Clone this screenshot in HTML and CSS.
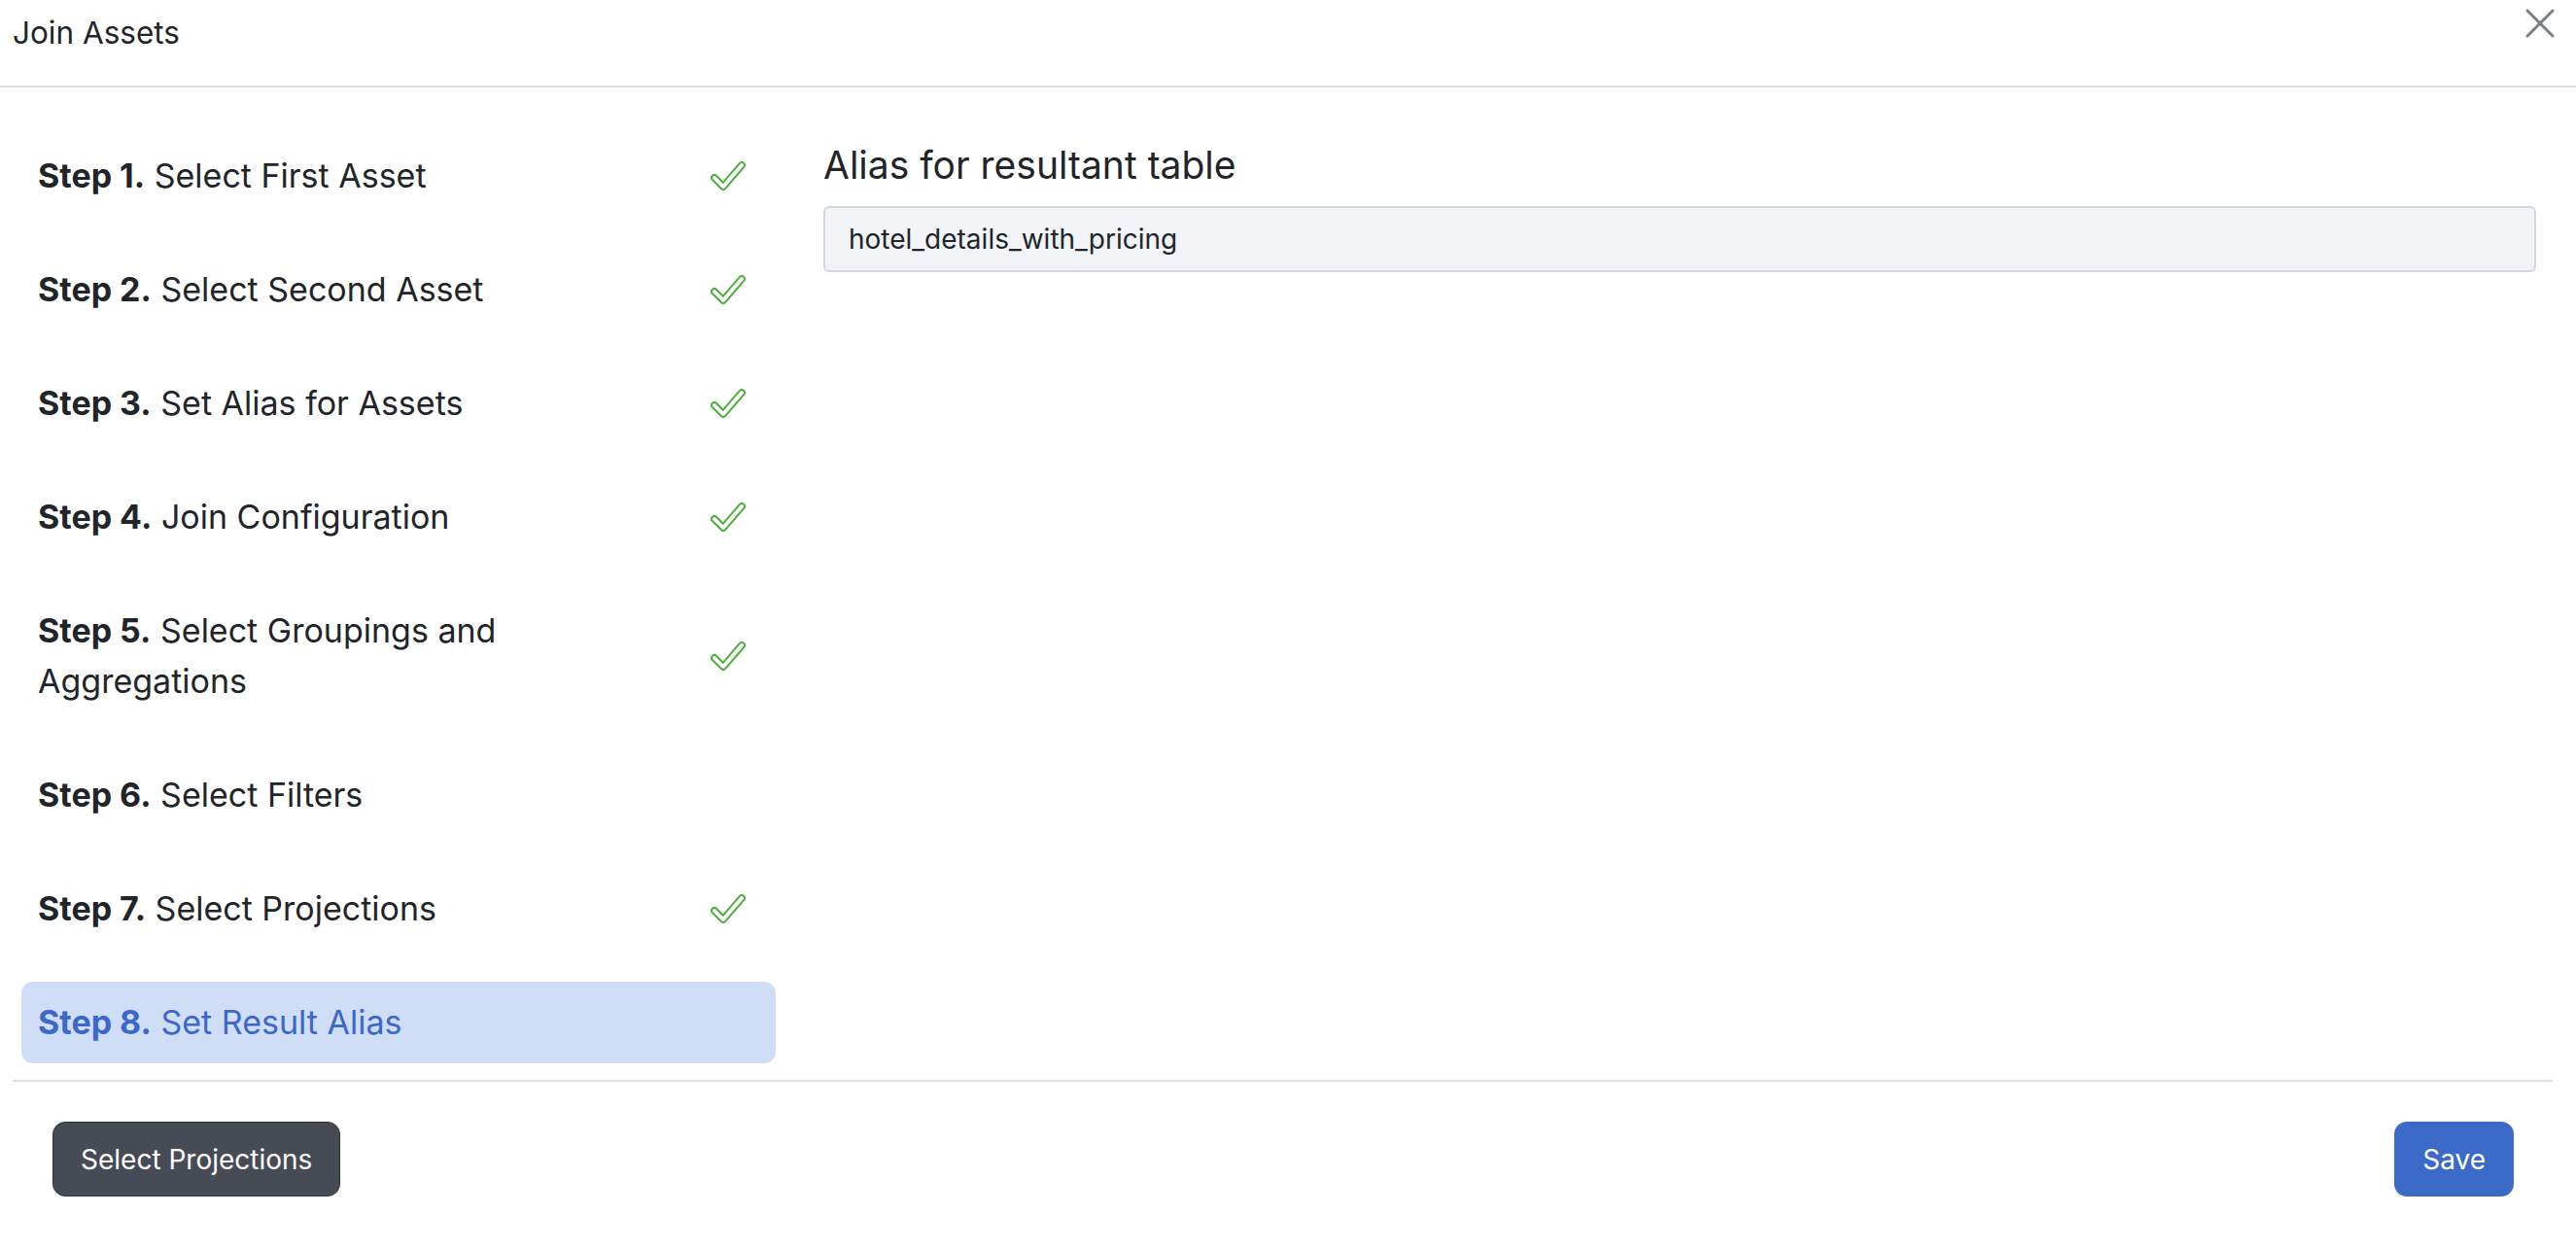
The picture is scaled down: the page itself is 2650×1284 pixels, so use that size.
FILE: index.html
```html
<!DOCTYPE html>
<html lang="en">
<head>
    <meta charset="UTF-8">
    <meta name="viewport" content="width=device-width, initial-scale=1.0">
    <title>Join Assets</title>
    <link rel="stylesheet" href="styles.css">
</head>
<body>
    <div class="modal">
        <div class="modal-header">
            <h2 class="modal-title">Join Assets</h2>
            <button class="close-btn" aria-label="Close">
                <svg width="30" height="30" viewBox="0 0 30 30">
                    <path d="M2 2 L28 28 M28 2 L2 28" stroke="#7b7f85" stroke-width="3" stroke-linecap="round" fill="none"/>
                </svg>
            </button>
        </div>

        <div class="modal-body">
            <ul class="steps">
                <li class="step done">
                    <span class="step-text"><b>Step 1.</b> Select First Asset</span>
                    <svg class="check" viewBox="0 0 36 32"><path class="check-outer" d="M4 18 L13 27 L32 5"/><path class="check-inner" d="M4 18 L13 27 L32 5"/></svg>
                </li>
                <li class="step done">
                    <span class="step-text"><b>Step 2.</b> Select Second Asset</span>
                    <svg class="check" viewBox="0 0 36 32"><path class="check-outer" d="M4 18 L13 27 L32 5"/><path class="check-inner" d="M4 18 L13 27 L32 5"/></svg>
                </li>
                <li class="step done">
                    <span class="step-text"><b>Step 3.</b> Set Alias for Assets</span>
                    <svg class="check" viewBox="0 0 36 32"><path class="check-outer" d="M4 18 L13 27 L32 5"/><path class="check-inner" d="M4 18 L13 27 L32 5"/></svg>
                </li>
                <li class="step done">
                    <span class="step-text"><b>Step 4.</b> Join Configuration</span>
                    <svg class="check" viewBox="0 0 36 32"><path class="check-outer" d="M4 18 L13 27 L32 5"/><path class="check-inner" d="M4 18 L13 27 L32 5"/></svg>
                </li>
                <li class="step done">
                    <span class="step-text"><b>Step 5.</b> Select Groupings and Aggregations</span>
                    <svg class="check" viewBox="0 0 36 32"><path class="check-outer" d="M4 18 L13 27 L32 5"/><path class="check-inner" d="M4 18 L13 27 L32 5"/></svg>
                </li>
                <li class="step">
                    <span class="step-text"><b>Step 6.</b> Select Filters</span>
                </li>
                <li class="step done">
                    <span class="step-text"><b>Step 7.</b> Select Projections</span>
                    <svg class="check" viewBox="0 0 36 32"><path class="check-outer" d="M4 18 L13 27 L32 5"/><path class="check-inner" d="M4 18 L13 27 L32 5"/></svg>
                </li>
                <li class="step active">
                    <span class="step-text"><b>Step 8.</b> Set Result Alias</span>
                </li>
            </ul>

            <div class="step-content">
                <label class="field-label" for="alias">Alias for resultant table</label>
                <input class="field-input" id="alias" type="text" value="hotel_details_with_pricing">
            </div>
        </div>

        <div class="modal-footer">
            <button class="btn btn-secondary">Select Projections</button>
            <button class="btn btn-primary">Save</button>
        </div>
    </div>
</body>
</html>
```

FILE: styles.css
```css
body {
    margin: 0;
    padding: 0;
    font-family: Inter, "Noto Sans", sans-serif;
    color: #212529;
    background-color: #fff;
}

.modal {
    width: 100%;
}

.modal-header {
    display: flex;
    justify-content: space-between;
    align-items: flex-start;
    padding: 14px 22px 34px 13px;
    border-bottom: 2px solid #dee2e6;
}

.modal-title {
    margin: 0;
    font-size: 31.5px;
    font-weight: 400;
    line-height: 40px;
}

.close-btn {
    background: none;
    border: none;
    padding: 0;
    margin-top: -5px;
    cursor: pointer;
    line-height: 0;
}

.modal-body {
    display: grid;
    grid-template-columns: 776px 1fr;
    column-gap: 49px;
    padding: 49px 41px 17px 22px;
}

.steps {
    list-style: none;
    margin: 0;
    padding: 0;
    display: flex;
    flex-direction: column;
    gap: 33px;
}

.step {
    display: flex;
    justify-content: space-between;
    align-items: center;
    padding: 16px 31px 16px 17px;
    font-size: 34px;
    line-height: 52px;
    border-radius: 12px;
}

.step-text {
    max-width: 520px;
}

.step-text b {
    font-weight: 700;
}

.step.active {
    background-color: #cfddf7;
    color: #3b68c9;
}

.check {
    width: 36px;
    height: 32px;
    flex-shrink: 0;
}

.check path {
    fill: none;
    stroke-linecap: round;
    stroke-linejoin: round;
}

.check-outer {
    stroke: #52b043;
    stroke-width: 8;
}

.check-inner {
    stroke: #fff;
    stroke-width: 3.8;
}

.step-content {
    display: flex;
    flex-direction: column;
}

.field-label {
    font-size: 39px;
    line-height: 46px;
    margin-top: 8px;
    margin-bottom: 19px;
}

.field-input {
    height: 68px;
    box-sizing: border-box;
    padding: 0 24px;
    font-family: Inter, "Noto Sans", sans-serif;
    font-size: 28px;
    color: #212529;
    background-color: #f2f3f6;
    border: 2px solid #d3d6da;
    border-radius: 6px;
}

.modal-footer {
    display: flex;
    justify-content: space-between;
    align-items: center;
    margin: 0 24px 0 13px;
    padding: 41px 40px 41px 41px;
    border-top: 2px solid #dee2e6;
}

.btn {
    height: 77px;
    padding: 0 28px;
    font-family: Inter, "Noto Sans", sans-serif;
    font-size: 28px;
    color: #fff;
    border: none;
    border-radius: 13px;
    cursor: pointer;
}

.btn-secondary {
    background-color: #474b55;
    border: 1px solid #2f323a;
}

.btn-primary {
    background-color: #3b6ac8;
    padding: 0 29px;
}
```
